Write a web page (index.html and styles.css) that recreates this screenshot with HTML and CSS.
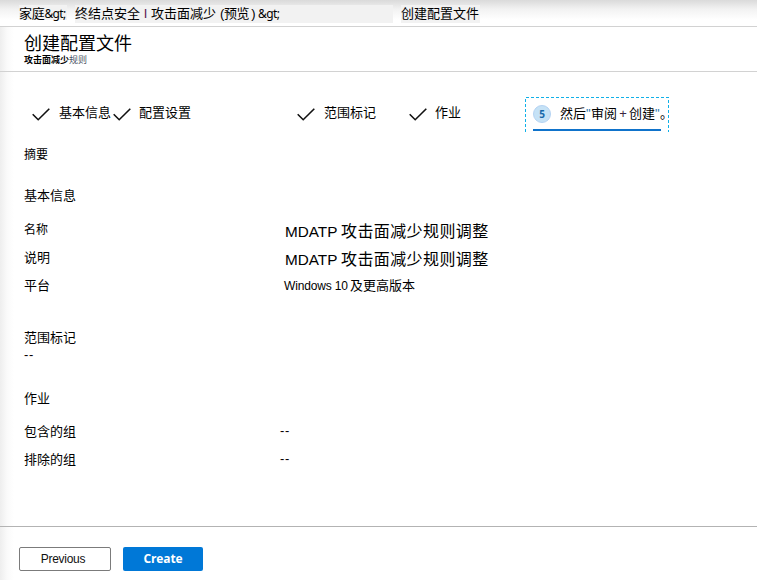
FILE: index.html
```html
<!DOCTYPE html>
<html lang="zh-CN">
<head>
<meta charset="utf-8">
<title>创建配置文件</title>
<link rel="stylesheet" href="styles.css">
</head>
<body>
<div class="page">
  <nav class="breadcrumb">
    <span class="crumb crumb-home">家庭<span class="latin">&amp;gt;</span></span>
    <span class="crumb crumb-security"><span>终结点安全</span><span class="bar">I</span><span class="asr">攻击面减少</span><span class="preview">(预览<span class="close">)</span></span><span class="latin">&amp;gt;</span></span>
    <span class="crumb crumb-current">创建配置文件</span>
  </nav>
  <header class="header">
    <h1>创建配置文件</h1>
    <p><b>攻击面减少</b><span class="faded">规则</span></p>
  </header>
  <ol class="steps">
    <li class="step step-basics"><svg class="check" viewBox="0 0 18 13"><path d="M.7 6.2 6.2 11.7 17.3.7"/></svg><span>基本信息</span></li>
    <li class="step step-settings"><svg class="check" viewBox="0 0 18 13"><path d="M.7 6.2 6.2 11.7 17.3.7"/></svg><span>配置设置</span></li>
    <li class="step step-tags"><svg class="check" viewBox="0 0 18 13"><path d="M.7 6.2 6.2 11.7 17.3.7"/></svg><span>范围标记</span></li>
    <li class="step step-assign"><svg class="check" viewBox="0 0 18 13"><path d="M.7 6.2 6.2 11.7 17.3.7"/></svg><span>作业</span></li>
    <li class="step-active">
      <svg class="outline" viewBox="0 0 144 35"><path d="M.5 35V.5H143.5V35"/></svg>
      <div class="active-inner"><span class="number">5</span><span class="active-label"><span>然后</span><i class="quote">"</i><span>审阅</span><span class="plus">+</span><span>创建</span><i class="quote">"</i><span>。</span></span></div>
    </li>
  </ol>
  <main class="content">
    <h2 class="summary">摘要</h2>
    <section class="basics">
      <h3>基本信息</h3>
      <dl>
        <dt>名称</dt><dd class="large"><span class="mdatp">MDATP</span>攻击面减少规则调整</dd>
        <dt>说明</dt><dd class="large"><span class="mdatp">MDATP</span>攻击面减少规则调整</dd>
        <dt>平台</dt><dd class="platform"><span class="windows">Windows 10</span>及更高版本</dd>
      </dl>
    </section>
    <section class="tags">
      <h3>范围标记</h3>
      <p class="dash">--</p>
    </section>
    <section class="assignments">
      <h3>作业</h3>
      <dl>
        <dt>包含的组</dt><dd class="dash">--</dd>
        <dt>排除的组</dt><dd class="dash">--</dd>
      </dl>
    </section>
  </main>
  <footer class="footer">
    <button class="previous">Previous</button>
    <button class="create">Create</button>
  </footer>
</div>
</body>
</html>
```

FILE: styles.css
```css
* { box-sizing: border-box; }
body, h1, h2, h3, p, dl, dd, ol { margin: 0; padding: 0; font-weight: 400; }
body {
  background: #fff;
  color: #000;
  font: 13px/20px "Liberation Sans", "Noto Sans CJK SC", sans-serif;
}
.page {
  display: flex;
  flex-direction: column;
  width: 757px;
  height: 580px;
  overflow: hidden;
  background: linear-gradient(to right, #eee 0, #fafafa 7px, #fff 14px);
}
.breadcrumb {
  display: flex;
  height: 27px;
  padding: 5px 0 0 19px;
  border-bottom: 1px solid #d2d2d2;
  background: linear-gradient(#dadada, #f2f2f2 9px, #fff 20px);
}
.crumb { display: flex; height: 18px; line-height: 17px; white-space: nowrap; background: #f2f2f2; }
.crumb-home { width: 48px; height: 15px; margin-right: 8px; letter-spacing: -.3px; }
.crumb-security { width: 318px; margin-right: 8px; }
.crumb-current { width: 79px; }
.latin { font-family: "Noto Sans", sans-serif; font-size: 12px; letter-spacing: -.6px; }
.bar { width: 11px; text-align: center; color: #5b2050; }
.asr { width: 69px; }
.preview { width: 38px; letter-spacing: -.4px; }
.close { margin-left: 2px; }
.header { height: 45px; padding: 6px 0 0 24px; border-bottom: 1px solid #d2d2d2; }
.header h1 { font-size: 18px; line-height: 22px; }
.header p { font-size: 9px; line-height: 11px; }
.header b { font-weight: 700; }
.faded { color: #4a5565; }
.steps { display: flex; height: 60px; padding: 25px 0 0 32px; list-style: none; }
.step { display: flex; align-items: center; height: 32px; white-space: nowrap; }
.step-basics { width: 81px; }
.step-settings { width: 184px; }
.step-tags { width: 112px; }
.step-assign { width: 116px; }
.check { width: 18px; height: 13px; margin: 3px 9px 0 0; fill: none; stroke: #111; stroke-width: 1.6; }
.step-settings .check { margin-right: 8px; }
.step-assign .check { margin-right: 8px; }
.step-active { position: relative; width: 144px; height: 35px; }
.outline { position: absolute; left: 0; top: 0; width: 144px; height: 35px; fill: none; stroke: #10b0e8; stroke-dasharray: 3 2; shape-rendering: crispEdges; }
.active-inner { display: flex; align-items: center; width: 128px; height: 34px; margin-left: 8px; border-bottom: 2px solid #0f73cb; white-space: nowrap; }
.number { flex: none; width: 18px; height: 18px; margin: 1px 9px 0 0; border: 1px solid #b5d3f3; border-radius: 50%; background: #c5e2f6; color: #1769aa; font: 700 10px/16px "Noto Sans", sans-serif; text-align: center; }
.active-label { display: flex; padding-top: 2px; }
.quote { width: 5px; color: #2878ae; font-style: normal; }
.plus { width: 12px; text-align: center; color: #3b2540; }
.content { flex: 1; padding-left: 24px; }
.summary { margin-top: 13px; font-size: 12px; line-height: 20px; }
h3 { font-size: 13px; line-height: 20px; }
.basics { margin-top: 21px; }
dl { display: grid; grid-template-columns: 261px 1fr; grid-auto-rows: 28px; align-items: center; }
.basics dl { margin-top: 10px; }
dt { font-size: 13px; }
.basics dt:first-child { font-size: 12px; }
.large { font-size: 16px; line-height: 28px; padding-top: 4px; letter-spacing: .4px; }
.mdatp { display: inline-block; width: 56px; font-size: 15.3px; letter-spacing: 0; }
.platform { margin-left: -1px; }
.windows { display: inline-block; width: 66px; font-size: 12px; letter-spacing: -.15px; }
.tags { margin-top: 28px; }
.dash { line-height: 14px; letter-spacing: .7px; }
.assignments { margin-top: 27px; }
.assignments dl { margin-top: 9px; }
.assignments .dash { margin-left: -5px; margin-top: -2px; }
.footer { display: flex; gap: 12px; height: 54px; padding: 20px 0 0 19px; border-top: 1px solid #b3b3b3; }
button { height: 24px; padding: 0; border-radius: 2px; font: 12px/20px "Liberation Sans", sans-serif; }
.previous { width: 92px; padding-right: 4px; border: 1px solid #7b7b7b; background: #fff; color: #111; letter-spacing: -.3px; }
.create { width: 80px; border: 0; background: #0078d7; color: #fff; font: 700 12px/24px "Open Sans", sans-serif; letter-spacing: -.1px; }
```
